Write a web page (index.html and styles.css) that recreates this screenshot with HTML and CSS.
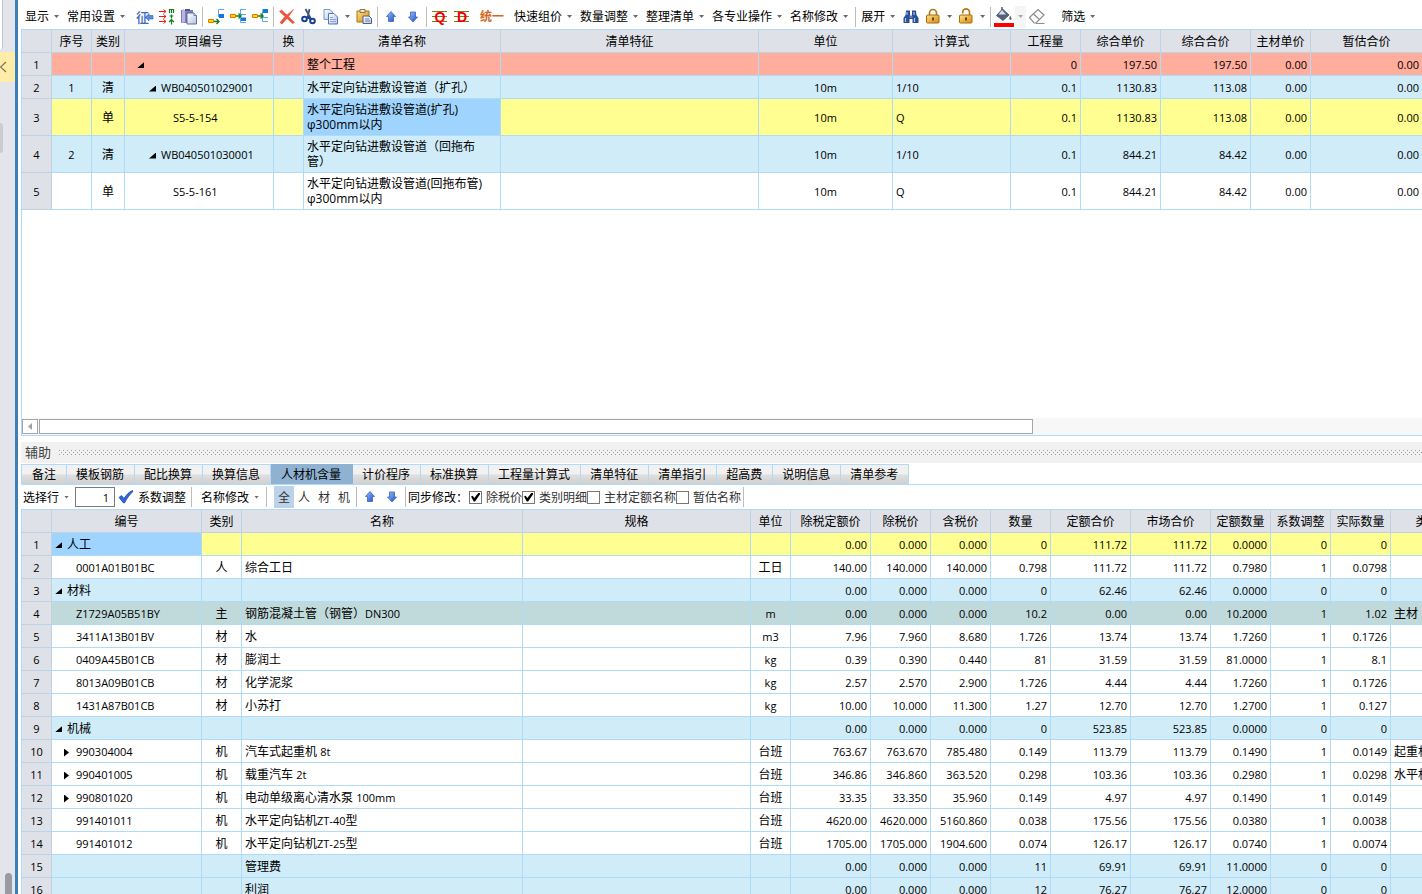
FILE: index.html
```html
<!DOCTYPE html>
<html lang="zh-CN">
<head>
<meta charset="utf-8">
<title>工程量清单</title>
<link rel="stylesheet" href="styles.css">
</head>
<body>
<svg class="defs" aria-hidden="true">
  <defs>
    <linearGradient id="blue" x1="0" y1="0" x2="1" y2="1"><stop offset="0" stop-color="#9cc0f8"/><stop offset="1" stop-color="#1d4fc4"/></linearGradient>
    <linearGradient id="gold" x1="0" y1="0" x2="1" y2="1"><stop offset="0" stop-color="#ffe08a"/><stop offset="1" stop-color="#d98a10"/></linearGradient>
    <linearGradient id="page" x1="0" y1="0" x2="1" y2="1"><stop offset="0" stop-color="#ffffff"/><stop offset="1" stop-color="#b4c6e4"/></linearGradient>
    <symbol id="up" viewBox="0 0 16 16"><path d="M8 2.500 12.500 7.500H10.500V12.500H5.500V7.500H3.500Z" fill="url(#blue)" stroke="#3563c4" stroke-width=".8"/></symbol>
    <symbol id="down" viewBox="0 0 16 16"><path d="M8 13 3.500 8H5.500V3H10.500V8H12.500Z" fill="url(#blue)" stroke="#3563c4" stroke-width=".8"/></symbol>
  </defs>
</svg>

<aside class="rail">
  <div class="rail-card"></div>
  <div class="rail-note"><svg width="8" height="12" viewBox="0 0 8 12"><path d="M6 1 0.500 6 6 11" fill="none" stroke="#7d7560" stroke-width="1.200"/></svg></div>
  <div class="rail-pill"></div>
  <div class="rail-thumb"></div>
</aside>

<main class="work">
  <section class="pane">
    <div class="toolbar">
      <button class="drop">显示</button>
      <button class="drop">常用设置</button>
      <span class="space"></span>
      <button class="icon" aria-label="征"><svg viewBox="0 0 16 16"><text x="-1" y="12.500" class="g-blue">征</text><path d="M8.500 8 12 4.500V6.500H16V10H12V12Z" fill="#5c8be0" stroke="#2f62c0" stroke-width=".6"/></svg></button>
      <button class="icon" aria-label="对应"><svg viewBox="0 0 16 16"><g stroke="#f01818" fill="none"><path d="M0 2.500H7M4.500 .5 7 2.500 4.500 4.500M0 7.500H7M4.500 5.500 7 7.500 4.500 9.500M0 12.500H7M4.500 10.500 7 12.500 4.500 14.500"/></g><path d="M10.500 4V.500H14.500V4M12.500 .5V4M12.500 5.500V9.500M10.500 7H14.500M12.500 10.500V15.500M10 13 12.500 10.500 15 13" stroke="#177a1b" stroke-width="1.200" fill="none"/></svg></button>
      <button class="icon" aria-label="粘贴清单"><svg viewBox="0 0 16 16"><path d="M0 1H12V14H0Z" fill="#7f7ec0"/><path d="M2 0 4 1V13L1 14V1Z" fill="#b9b5e6"/><path d="M4 0H9V2H4Z" fill="#5a5a78"/><path d="M6 4H13L15.500 6.500V15H6Z" fill="url(#page)" stroke="#4d6590" stroke-width=".9"/><path d="M13 4V6.500H15.500" fill="#dce6f6" stroke="#4d6590" stroke-width=".7"/></svg></button>
      <i class="sep"></i>
      <button class="icon" aria-label="插入上级"><svg viewBox="0 0 16 16"><path d="M16 .5H10.500V8" fill="none" stroke="#5ba8e8"/><path d="M11 5H16V9H11Z" fill="#1878d0"/><path d="M.5 10.500H5.500V13.500H.500Z" fill="#ffd800" stroke="#e07800"/><path d="M6 12.500H11M8.500 10 11 12.500 8.500 15" fill="none" stroke="#158018" stroke-width="1.400"/></svg></button>
      <button class="icon" aria-label="插入同级"><svg viewBox="0 0 16 16"><path d="M16 .5H10.500V13.500H16M10.500 5.500H16" fill="none" stroke="#5ba8e8"/><path d="M11 8.500H16V12H11Z" fill="#1878d0"/><path d="M.5 5.500H5.500V8.500H.500Z" fill="#ffd800" stroke="#e07800"/><path d="M6 7H11M8.500 4.500 11 7 8.500 9.500" fill="none" stroke="#158018" stroke-width="1.400"/></svg></button>
      <button class="icon" aria-label="插入下级"><svg viewBox="0 0 16 16"><path d="M16 12.500H10.500V3M10.500 8.500H16" fill="none" stroke="#5ba8e8"/><path d="M10.500 0H16V4H10.500Z" fill="#1878d0"/><path d="M.5 5.500H5.500V8.500H.500Z" fill="#ffd800" stroke="#e07800"/><path d="M6 7H11M8.500 4.500 11 7 8.500 9.500" fill="none" stroke="#158018" stroke-width="1.400"/></svg></button>
      <i class="sep"></i>
      <button class="icon" aria-label="删除"><svg viewBox="0 0 16 16"><path d="M.5 2.500 2.500 1 8 6 14.500 .5 9.500 7.500 15.500 13.500 13.500 14.500 8 9.500 3 15 1 13.500 6 7.500Z" fill="#f0553c" stroke="#d83a22" stroke-width=".5"/></svg></button>
      <button class="icon" aria-label="剪切"><svg viewBox="0 0 16 16"><path d="M4.500 0 9.500 9M8.500 0 6.500 9" stroke="#3c5878" stroke-width="1.800" fill="none"/><circle cx="3.500" cy="10" r="2.300" fill="none" stroke="#173f92" stroke-width="2"/><circle cx="11.500" cy="12" r="2.300" fill="none" stroke="#173f92" stroke-width="2"/><path d="M6 8 10 10" stroke="#173f92" stroke-width="2"/></svg></button>
      <button class="icon" aria-label="复制"><svg viewBox="0 0 16 16"><path d="M1 .5H7L9.500 3V10.500H1Z" fill="url(#page)" stroke="#7a96cc"/><path d="M5.500 4.500H11L14.500 8V15H5.500Z" fill="url(#page)" stroke="#5676b8"/><path d="M7 8.500H10M7 10.500H13M7 12.500H13" stroke="#8ca8dc"/></svg></button>
      <button class="more" aria-label="更多复制"></button>
      <button class="icon" aria-label="粘贴"><svg viewBox="0 0 16 16"><path d="M1 2H13V13H1Z" fill="url(#gold)" stroke="#a8700c"/><path d="M4 .5H9V3.500H4Z" fill="#ece4c8" stroke="#75602c" stroke-width=".8"/><path d="M7 7H13L15.500 9.500V14.500H7Z" fill="url(#page)" stroke="#486088"/><path d="M9 10H13M9 12H14" stroke="#7088b0"/></svg></button>
      <i class="sep"></i>
      <button class="icon" aria-label="上移"><svg><use href="#up"/></svg></button>
      <button class="icon" aria-label="下移"><svg><use href="#down"/></svg></button>
      <i class="sep"></i>
      <button class="icon" aria-label="Q"><svg viewBox="0 0 16 16"><path d="M0 2.500H15M0 7.500H15M0 12.500H15" stroke="#7d7a16"/><text x="2.500" y="13" class="g-red">Q</text></svg></button>
      <button class="icon" aria-label="D"><svg viewBox="0 0 16 16"><path d="M0 2.500H15M0 7.500H15M0 12.500H15" stroke="#7d7a16"/><text x="3" y="13" class="g-red">D</text></svg></button>
      <button class="unify">统一</button>
      <button class="drop">快速组价</button>
      <button class="drop">数量调整</button>
      <button class="drop">整理清单</button>
      <button class="drop">各专业操作</button>
      <button class="drop">名称修改</button>
      <i class="sep"></i>
      <button class="drop">展开</button>
      <button class="icon" aria-label="查找"><svg viewBox="0 0 16 16"><path d="M3 1.500H7V5L7.500 7H8.500L9 5V1.500H13L13.500 6 15.500 9V14H9.500V10H6.500V14H.500V9L2.500 6Z" fill="#2c4f94"/><path d="M4 3V6M11 3V6M2.500 9V13M11.500 9V13" stroke="#a8c4f0" stroke-width="1.200"/><path d="M6.500 8H9.500" stroke="#89a8de"/></svg></button>
      <button class="icon" aria-label="锁定"><svg viewBox="0 0 16 16"><path d="M4.500 7V4A3.500 3.500 0 0 1 11.500 4V7" fill="none" stroke="#b07a18" stroke-width="1.700"/><rect x="1.500" y="6" width="12.500" height="8" rx="1" fill="url(#gold)" stroke="#a86c0c"/><path d="M7 8.500H9V11.500H7Z" fill="#6e4400"/></svg></button>
      <button class="more" aria-label="更多锁定"></button>
      <button class="icon" aria-label="解锁"><svg viewBox="0 0 16 16"><path d="M11.500 7V3.500A3.400 3.400 0 0 0 4.700 3V4.500" fill="none" stroke="#b07a18" stroke-width="1.700"/><rect x="1.500" y="6" width="12.500" height="8" rx="1" fill="url(#gold)" stroke="#a86c0c"/><path d="M7 8.500H9V11.500H7Z" fill="#6e4400"/></svg></button>
      <button class="more" aria-label="更多解锁"></button>
      <i class="sep"></i>
      <button class="icon fill" aria-label="填充颜色"><svg viewBox="0 0 20 20"><path d="M8 0V6" stroke="#526079" stroke-width="1.500"/><path d="M8.500 2 15 8 9 13.500 2.500 8.500Z" fill="#526079" stroke="#526079"/><path d="M8 3 4.500 7.500H12Z" fill="#d8dfeb"/><path d="M16 8.500C18 11.500 18 12.500 16.500 13 15 12.500 15 11.500 16 8.500Z" fill="#526079"/><path d="M0 16H20V20H0Z" fill="#ff0000"/></svg></button>
      <button class="more pale" aria-label="更多颜色"></button>
      <button class="icon" aria-label="清除"><svg viewBox="0 0 16 16"><path d="M.5 8.500 9 .500 15 6 7 14H5Z" fill="#fff" stroke="#8d8d8d" stroke-width="1.200"/><path d="M4.500 5 10.500 10.500M7 14.500H15.500" stroke="#8d8d8d" fill="none" stroke-width="1.200"/></svg></button>
      <span class="space wide"></span>
      <button class="drop">筛选</button>
    </div>

    <div class="gridbox">
      <table class="grid bill">
        <colgroup><col class="w30"><col class="w40"><col class="w33"><col class="w149"><col class="w30"><col class="w197"><col class="w258"><col class="w134"><col class="w118"><col class="w70"><col class="w80"><col class="w90"><col class="w60"><col></colgroup>
        <thead><tr><th></th><th>序号</th><th>类别</th><th>项目编号</th><th>换</th><th>清单名称</th><th>清单特征</th><th>单位</th><th>计算式</th><th>工程量</th><th>综合单价</th><th>综合合价</th><th>主材单价</th><th>暂估合价</th></tr></thead>
        <tbody>
          <tr class="total"><th>1</th><td></td><td></td><td class="in1"><button class="open" aria-label="折叠"></button></td><td></td><td>整个工程</td><td></td><td></td><td></td><td class="n">0</td><td class="n">197.50</td><td class="n">197.50</td><td class="n">0.00</td><td class="n">0.00</td></tr>
          <tr class="group"><th>2</th><td class="c k">1</td><td class="c">清</td><td class="in2 k"><button class="open" aria-label="折叠"></button>WB040501029001</td><td></td><td>水平定向钻进敷设管道（扩孔）</td><td></td><td class="c k">10m</td><td class="k">1/10</td><td class="n">0.1</td><td class="n">1130.83</td><td class="n">113.08</td><td class="n">0.00</td><td class="n">0.00</td></tr>
          <tr class="current tall"><th>3</th><td></td><td class="c">单</td><td class="in4 k">S5-5-154</td><td></td><td class="picked">水平定向钻进敷设管道(扩孔)<br>φ300mm以内</td><td></td><td class="c k">10m</td><td class="k">Q</td><td class="n">0.1</td><td class="n">1130.83</td><td class="n">113.08</td><td class="n">0.00</td><td class="n">0.00</td></tr>
          <tr class="group tall"><th>4</th><td class="c k">2</td><td class="c">清</td><td class="in2 k"><button class="open" aria-label="折叠"></button>WB040501030001</td><td></td><td>水平定向钻进敷设管道（回拖布<wbr>管）</td><td></td><td class="c k">10m</td><td class="k">1/10</td><td class="n">0.1</td><td class="n">844.21</td><td class="n">84.42</td><td class="n">0.00</td><td class="n">0.00</td></tr>
          <tr class="tall"><th>5</th><td></td><td class="c">单</td><td class="in4 k">S5-5-161</td><td></td><td>水平定向钻进敷设管道(回拖布管)<br>φ300mm以内</td><td></td><td class="c k">10m</td><td class="k">Q</td><td class="n">0.1</td><td class="n">844.21</td><td class="n">84.42</td><td class="n">0.00</td><td class="n">0.00</td></tr>
        </tbody>
      </table>
    </div>
    <div class="hscroll"><button class="hscroll-left" aria-label="向左滚动"></button><div class="hscroll-thumb"></div></div>
  </section>

  <section class="pane">
    <header class="band"><h2>辅助</h2><div class="dots"></div></header>
    <nav class="tabs">
      <button class="first">备注</button><button>模板钢筋</button><button>配比换算</button><button>换算信息</button><button class="on">人材机含量</button><button>计价程序</button><button>标准换算</button><button>工程量计算式</button><button>清单特征</button><button>清单指引</button><button>超高费</button><button>说明信息</button><button>清单参考</button>
    </nav>
    <div class="toolbar sub">
      <button class="drop flush">选择行</button>
      <input class="rowno" type="text" value="1" aria-label="行号">
      <button class="adjust"><svg viewBox="0 0 16 16"><path d="M1 8.500 3.500 6.500 6 9.500C8.500 5.500 11 3 14.500 1.500L15 2.500C11 6 9 9.500 6.500 14H5.500Z" fill="#2f66e0" stroke="#1a3fa0" stroke-width=".7"/></svg>系数调整</button>
      <i class="sep"></i>
      <span class="space"></span>
      <button class="drop">名称修改</button>
      <i class="sep after"></i>
      <div class="kinds"><button class="on">全</button><button>人</button><button>材</button><button>机</button></div>
      <i class="sep"></i>
      <button class="icon" aria-label="上移"><svg><use href="#up"/></svg></button>
      <button class="icon" aria-label="下移"><svg><use href="#down"/></svg></button>
      <i class="sep"></i>
      <span class="sync">同步修改：</span>
      <label class="tick"><input type="checkbox" checked>除税价</label><label class="tick"><input type="checkbox" checked>类别明细</label><label class="tick"><input type="checkbox">主材定额名称</label><label class="tick"><input type="checkbox">暂估名称</label>
      <i class="sep"></i>
    </div>

    <div class="gridbox">
      <table class="grid parts">
        <colgroup><col class="w30"><col class="w150"><col class="w40"><col class="w281"><col><col class="w40"><col class="w80"><col class="w60"><col class="w60"><col class="w60"><col class="w80"><col class="w80"><col class="w60"><col class="w60"><col class="w60"><col class="w74"></colgroup>
        <thead><tr><th></th><th>编号</th><th>类别</th><th>名称</th><th>规格</th><th>单位</th><th>除税定额价</th><th>除税价</th><th>含税价</th><th>数量</th><th>定额合价</th><th>市场合价</th><th>定额数量</th><th>系数调整</th><th>实际数量</th><th>类别</th></tr></thead>
        <tbody>
          <tr class="current"><th>1</th><td class="picked"><button class="open" aria-label="折叠"></button>人工</td><td></td><td></td><td></td><td></td><td class="n">0.00</td><td class="n">0.000</td><td class="n">0.000</td><td class="n">0</td><td class="n">111.72</td><td class="n">111.72</td><td class="n">0.0000</td><td class="n">0</td><td class="n">0</td><td></td></tr>
          <tr><th>2</th><td class="in3 k">0001A01B01BC</td><td class="c">人</td><td>综合工日</td><td></td><td class="c">工日</td><td class="n">140.00</td><td class="n">140.000</td><td class="n">140.000</td><td class="n">0.798</td><td class="n">111.72</td><td class="n">111.72</td><td class="n">0.7980</td><td class="n">1</td><td class="n">0.0798</td><td></td></tr>
          <tr class="group"><th>3</th><td><button class="open" aria-label="折叠"></button>材料</td><td></td><td></td><td></td><td></td><td class="n">0.00</td><td class="n">0.000</td><td class="n">0.000</td><td class="n">0</td><td class="n">62.46</td><td class="n">62.46</td><td class="n">0.0000</td><td class="n">0</td><td class="n">0</td><td></td></tr>
          <tr class="main-part"><th>4</th><td class="in3 k">Z1729A05B51BY</td><td class="c">主</td><td>钢筋混凝土管（钢管）<span class="k">DN300</span></td><td></td><td class="c k">m</td><td class="n">0.00</td><td class="n">0.000</td><td class="n">0.000</td><td class="n">10.2</td><td class="n">0.00</td><td class="n">0.00</td><td class="n">10.2000</td><td class="n">1</td><td class="n">1.02</td><td>主材</td></tr>
          <tr><th>5</th><td class="in3 k">3411A13B01BV</td><td class="c">材</td><td>水</td><td></td><td class="c k">m3</td><td class="n">7.96</td><td class="n">7.960</td><td class="n">8.680</td><td class="n">1.726</td><td class="n">13.74</td><td class="n">13.74</td><td class="n">1.7260</td><td class="n">1</td><td class="n">0.1726</td><td></td></tr>
          <tr><th>6</th><td class="in3 k">0409A45B01CB</td><td class="c">材</td><td>膨润土</td><td></td><td class="c k">kg</td><td class="n">0.39</td><td class="n">0.390</td><td class="n">0.440</td><td class="n">81</td><td class="n">31.59</td><td class="n">31.59</td><td class="n">81.0000</td><td class="n">1</td><td class="n">8.1</td><td></td></tr>
          <tr><th>7</th><td class="in3 k">8013A09B01CB</td><td class="c">材</td><td>化学泥浆</td><td></td><td class="c k">kg</td><td class="n">2.57</td><td class="n">2.570</td><td class="n">2.900</td><td class="n">1.726</td><td class="n">4.44</td><td class="n">4.44</td><td class="n">1.7260</td><td class="n">1</td><td class="n">0.1726</td><td></td></tr>
          <tr><th>8</th><td class="in3 k">1431A87B01CB</td><td class="c">材</td><td>小苏打</td><td></td><td class="c k">kg</td><td class="n">10.00</td><td class="n">10.000</td><td class="n">11.300</td><td class="n">1.27</td><td class="n">12.70</td><td class="n">12.70</td><td class="n">1.2700</td><td class="n">1</td><td class="n">0.127</td><td></td></tr>
          <tr class="group"><th>9</th><td><button class="open" aria-label="折叠"></button>机械</td><td></td><td></td><td></td><td></td><td class="n">0.00</td><td class="n">0.000</td><td class="n">0.000</td><td class="n">0</td><td class="n">523.85</td><td class="n">523.85</td><td class="n">0.0000</td><td class="n">0</td><td class="n">0</td><td></td></tr>
          <tr><th>10</th><td class="in1 k"><button class="shut" aria-label="展开"></button>990304004</td><td class="c">机</td><td>汽车式起重机 <span class="k">8t</span></td><td></td><td class="c">台班</td><td class="n">763.67</td><td class="n">763.670</td><td class="n">785.480</td><td class="n">0.149</td><td class="n">113.79</td><td class="n">113.79</td><td class="n">0.1490</td><td class="n">1</td><td class="n">0.0149</td><td>起重机械</td></tr>
          <tr><th>11</th><td class="in1 k"><button class="shut" aria-label="展开"></button>990401005</td><td class="c">机</td><td>载重汽车 <span class="k">2t</span></td><td></td><td class="c">台班</td><td class="n">346.86</td><td class="n">346.860</td><td class="n">363.520</td><td class="n">0.298</td><td class="n">103.36</td><td class="n">103.36</td><td class="n">0.2980</td><td class="n">1</td><td class="n">0.0298</td><td>水平机械</td></tr>
          <tr><th>12</th><td class="in1 k"><button class="shut" aria-label="展开"></button>990801020</td><td class="c">机</td><td>电动单级离心清水泵 <span class="k">100mm</span></td><td></td><td class="c">台班</td><td class="n">33.35</td><td class="n">33.350</td><td class="n">35.960</td><td class="n">0.149</td><td class="n">4.97</td><td class="n">4.97</td><td class="n">0.1490</td><td class="n">1</td><td class="n">0.0149</td><td></td></tr>
          <tr><th>13</th><td class="in3 k">991401011</td><td class="c">机</td><td>水平定向钻机<span class="k">ZT-40</span>型</td><td></td><td class="c">台班</td><td class="n">4620.00</td><td class="n">4620.000</td><td class="n">5160.860</td><td class="n">0.038</td><td class="n">175.56</td><td class="n">175.56</td><td class="n">0.0380</td><td class="n">1</td><td class="n">0.0038</td><td></td></tr>
          <tr><th>14</th><td class="in3 k">991401012</td><td class="c">机</td><td>水平定向钻机<span class="k">ZT-25</span>型</td><td></td><td class="c">台班</td><td class="n">1705.00</td><td class="n">1705.000</td><td class="n">1904.600</td><td class="n">0.074</td><td class="n">126.17</td><td class="n">126.17</td><td class="n">0.0740</td><td class="n">1</td><td class="n">0.0074</td><td></td></tr>
          <tr class="group"><th>15</th><td></td><td></td><td>管理费</td><td></td><td></td><td class="n">0.00</td><td class="n">0.000</td><td class="n">0.000</td><td class="n">11</td><td class="n">69.91</td><td class="n">69.91</td><td class="n">11.0000</td><td class="n">0</td><td class="n">0</td><td></td></tr>
          <tr class="group"><th>16</th><td></td><td></td><td>利润</td><td></td><td></td><td class="n">0.00</td><td class="n">0.000</td><td class="n">0.000</td><td class="n">12</td><td class="n">76.27</td><td class="n">76.27</td><td class="n">12.0000</td><td class="n">0</td><td class="n">0</td><td></td></tr>
        </tbody>
      </table>
    </div>
  </section>
</main>
</body>
</html>
```
FILE: styles.css
```css
:root {
  --line: #afdaf9;
  --head-line: #bfd2e4;
  --head: #dee1e7;
}

* { box-sizing: border-box; }

body {
  margin: 0;
  height: 100vh;
  display: flex;
  overflow: hidden;
  background: #fff;
  color: #000;
  font: 12px/15px "Open Sans", "Noto Sans CJK SC", sans-serif;
}

.defs { position: absolute; width: 0; height: 0; }

button {
  margin: 0;
  padding: 0;
  border: 0;
  background: none;
  color: inherit;
  font: inherit;
  white-space: nowrap;
}

/* Left rail */
.rail {
  flex: none;
  width: 18px;
  border-right: 3px solid #3d80b6;
  background: #e4e5ea;
  display: flex;
  flex-direction: column;
}
.rail-card { width: 3px; height: 50px; background: #fff; border-right: 1px solid #c4c6cc; border-radius: 0 0 4px 0; }
.rail-note { height: 30px; margin-top: 2px; background: #ffeca6; display: flex; align-items: center; }
.rail-pill { width: 3px; height: 30px; margin-top: 41px; background: #cbccd1; border-radius: 0 3px 3px 0; }
.rail-thumb { width: 7px; height: 21px; margin: auto 0 0 5px; background: #999ba0; border-radius: 4px 4px 0 0; }

.work {
  flex: 1;
  min-width: 0;
  padding-left: 3px;
  display: grid;
  grid-template-columns: minmax(0, 1fr);
  grid-template-rows: minmax(0, 436fr) minmax(0, 458fr);
}
.pane { display: flex; flex-direction: column; min-width: 0; min-height: 0; }

/* Toolbars */
.toolbar {
  flex: none;
  height: 29px;
  padding: 4px 0 0 1px;
  display: flex;
  align-items: center;
  overflow: hidden;
}
.toolbar > * { flex: none; }
.drop { padding: 0 5px 0 3px; display: flex; align-items: center; gap: 5px; }
.drop::after, .more::after {
  content: "";
  width: 5px;
  height: 3px;
  background: #6a6a6a;
  clip-path: polygon(0 0, 100% 0, 50% 100%);
}
.flush { padding: 0 5px 0 1px; }
.icon { width: 22px; height: 22px; display: grid; place-items: center; }
.icon svg { width: 16px; height: 16px; overflow: visible; }
.fill svg { width: 20px; height: 20px; }
.more { width: 11px; height: 22px; display: grid; place-items: center; }
.pale { background: #f5f5f5; }
.pale::after { background: #aaa; }
.unify { padding: 0 7px; color: #d2691e; font-weight: 700; }
.sep { width: 5px; height: 20px; display: flex; justify-content: center; }
.sep::before { content: ""; width: 1px; background: #bdbdbd; }
.after { margin-right: 5px; }
.space { width: 4px; }
.wide { width: 10px; }
.g-blue { font-size: 13px; font-weight: 500; fill: #3f68b8; }
.g-red { font: 700 14px "Liberation Sans", sans-serif; fill: #f00000; }

.sub { height: 24px; padding: 0 0 0 1px; }
.rowno {
  width: 40px;
  height: 20px;
  margin-left: 1px;
  padding: 0 5px 0 0;
  border: 1px solid #7a7a7a;
  background: #fff;
  font: 11px/15px "Open Sans", sans-serif;
  text-align: right;
}
.adjust { padding: 0 3px 0 3px; display: flex; align-items: center; gap: 4px; }
.adjust svg { width: 16px; height: 16px; }
.kinds { display: flex; }
.kinds button { width: 20px; height: 22px; color: #333; }
.kinds .on { background: #bcd2e8; }
.sync { width: 61px; }
.tick { display: flex; align-items: center; gap: 4px; color: #333; }
.tick input {
  appearance: none;
  width: 13px;
  height: 13px;
  margin: 0;
  border: 1px solid #777;
  background: #fff;
  display: grid;
  place-items: center;
}
.tick input:checked::before {
  content: "";
  width: 9px;
  height: 9px;
  background: #000;
  clip-path: polygon(0 45%, 18% 35%, 36% 60%, 85% 0, 100% 0, 100% 20%, 45% 100%, 30% 100%);
}

/* Lower pane heading and tabs */
.band { flex: none; height: 21px; margin-top: 6px; padding-left: 4px; background: #f1f1f1; display: flex; align-items: center; gap: 8px; }
.band h2 { margin: 0; color: #444; font-size: 13px; font-weight: 400; }
.dots {
  flex: 1;
  height: 5px;
  background:
    conic-gradient(from 270deg at 1px 1px, #a0a0a0 90deg, transparent 0) 0 0 / 4px 4px,
    conic-gradient(from 270deg at 1px 1px, #a0a0a0 90deg, transparent 0) 2px 2px / 4px 4px;
}
.tabs { flex: none; height: 21px; margin-top: 1px; border-bottom: 1px solid var(--line); display: flex; }
.tabs button {
  padding: 0 10px 0 9px;
  border-top: 1px solid var(--line);
  border-right: 1px solid var(--line);
  background: linear-gradient(#f1f1f1 45%, #dedede 55%, #d0d0d0);
}
.tabs .first { padding: 0 10px; border-left: 1px solid var(--line); }
.tabs .on { padding: 0 11px 0 10px; background: #8fb1d2; border-color: #8fb1d2; }

/* Data grids */
.gridbox { flex: 1; min-height: 0; overflow: hidden; border-top: 1px solid var(--line); border-left: 1px solid var(--line); }
.grid { width: 100%; table-layout: fixed; border-collapse: separate; border-spacing: 0; text-spacing-trim: space-all; }
.parts { min-width: 1443px; }
.grid th, .grid td {
  height: 23px;
  padding: 0 3px;
  border-right: 1px solid var(--line);
  border-bottom: 1px solid var(--line);
  overflow: hidden;
  vertical-align: middle;
  text-align: left;
  white-space: nowrap;
}
.grid th { padding: 0; border-color: var(--head-line); background: var(--head); font-weight: 400; text-align: center; }
.grid .tall > * { height: 37px; white-space: normal; }
.bill tr > :last-child { border-right: 0; }
.grid .c { text-align: center; }
.grid .n { text-align: right; }
.n, .k, tbody th { font-size: 11px; }
.total td { background: #ffad9c; }
.group td { background: #cfecf8; }
.current td { background: #ffff91; }
.main-part td { background: #c0d9da; }
.grid .picked { background: #9fd4ff; }
.grid .in1 { padding-left: 12px; }
.grid .in2 { padding-left: 24px; }
.grid .in3 { padding-left: 24px; }
.grid .in4 { padding-left: 48px; }
.open, .shut { width: 12px; height: 7px; vertical-align: middle; }
.open::before, .shut::before { content: ""; display: block; width: 7px; height: 6px; background: #000; clip-path: polygon(100% 0, 100% 100%, 0 100%); }
.shut { height: 8px; }
.shut::before { width: 5px; height: 8px; clip-path: polygon(0 0, 100% 50%, 0 100%); }

.w30 { width: 30px; }
.w33 { width: 33px; }
.w40 { width: 40px; }
.w60 { width: 60px; }
.w70 { width: 70px; }
.w74 { width: 74px; }
.w80 { width: 80px; }
.w90 { width: 90px; }
.w118 { width: 118px; }
.w134 { width: 134px; }
.w149 { width: 149px; }
.w150 { width: 150px; }
.w197 { width: 197px; }
.w258 { width: 258px; }
.w281 { width: 281px; }

/* Horizontal scroll bar */
.hscroll { flex: none; height: 18px; padding: 1px 0; border-left: 1px solid var(--line); border-bottom: 1px solid var(--line); background: #f7f7f7; display: flex; gap: 1px; }
.hscroll-left { width: 16px; border: 1px solid #a6a6a6; background: #fff; display: grid; place-items: center; }
.hscroll-left::before { content: ""; width: 4px; height: 7px; background: #a0a0a0; clip-path: polygon(100% 0, 100% 100%, 0 50%); }
.hscroll-thumb { width: 71%; border: 1px solid #a6a6a6; background: #fff; }
```
